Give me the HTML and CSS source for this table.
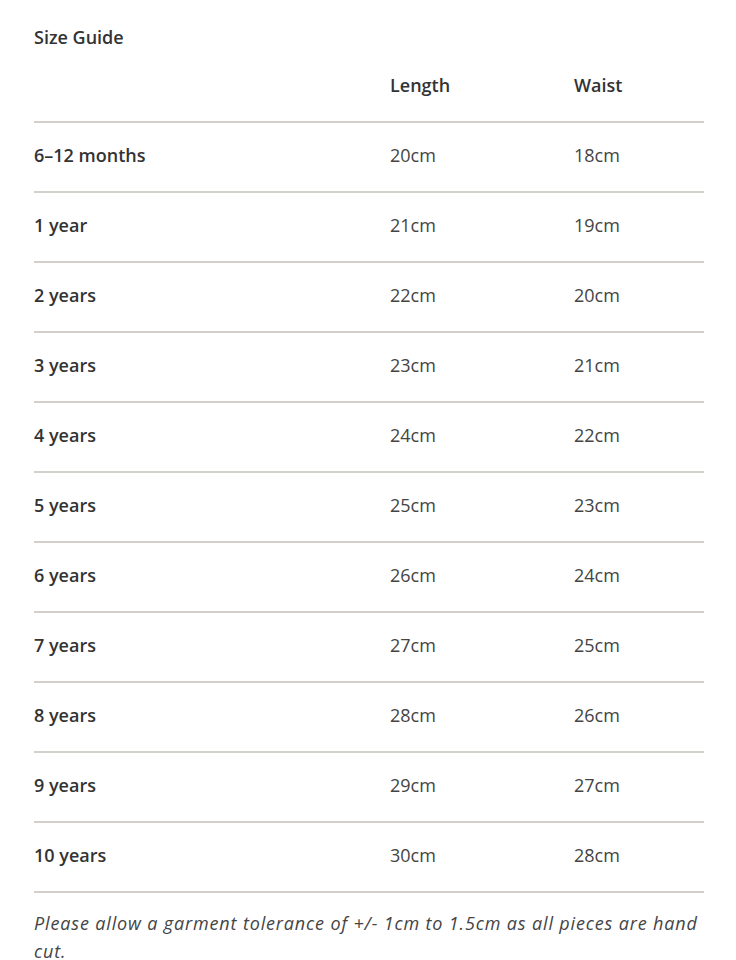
FILE: index.html
```html
<!DOCTYPE html>
<html>
<head>
<meta charset="utf-8">
<link rel="stylesheet" href="styles.css">
</head>
<body>
<div class="guide">
  <h2 class="title">Size Guide</h2>
  <table class="sizes">
    <thead>
      <tr><th class="c1"></th><th class="c2">Length</th><th class="c3">Waist</th></tr>
    </thead>
    <tbody>
      <tr><th>6–12 months</th><td>20cm</td><td>18cm</td></tr>
      <tr><th>1 year</th><td>21cm</td><td>19cm</td></tr>
      <tr><th>2 years</th><td>22cm</td><td>20cm</td></tr>
      <tr><th>3 years</th><td>23cm</td><td>21cm</td></tr>
      <tr><th>4 years</th><td>24cm</td><td>22cm</td></tr>
      <tr><th>5 years</th><td>25cm</td><td>23cm</td></tr>
      <tr><th>6 years</th><td>26cm</td><td>24cm</td></tr>
      <tr><th>7 years</th><td>27cm</td><td>25cm</td></tr>
      <tr><th>8 years</th><td>28cm</td><td>26cm</td></tr>
      <tr><th>9 years</th><td>29cm</td><td>27cm</td></tr>
      <tr><th>10 years</th><td>30cm</td><td>28cm</td></tr>
    </tbody>
  </table>
  <p class="note">Please allow a garment tolerance of +/- 1cm to 1.5cm as all pieces are hand cut.</p>
</div>
</body>
</html>
```
FILE: styles.css
```css
html, body {
  margin: 0;
  padding: 0;
  background: #fff;
}
body {
  font-family: "Open Sans", "Liberation Sans", sans-serif;
  color: #333;
  font-size: 18px;
}
.guide {
  padding: 23px 32px 0 34px;
}
.title {
  margin: 0;
  font-size: 18px;
  font-weight: 600;
  line-height: 28px;
  height: 30px;
}
.sizes {
  width: 670px;
  border-collapse: collapse;
  table-layout: fixed;
}
.c1 { width: 356px; }
.c2 { width: 184px; }
.c3 { width: 130px; }
.sizes th, .sizes td {
  height: 64px;
  padding: 0 0 4px;
  text-align: left;
  vertical-align: middle;
  border-bottom: 2px solid #d3cfcb;
  line-height: 24px;
}
.sizes th {
  font-weight: 600;
  color: #333;
}
.sizes td {
  font-weight: 400;
  color: #444;
}
.note {
  margin: 16px 0 0;
  font-style: italic;
  line-height: 28px;
  color: #444;
  width: 670px;
  letter-spacing: 0.85px;
}
```
